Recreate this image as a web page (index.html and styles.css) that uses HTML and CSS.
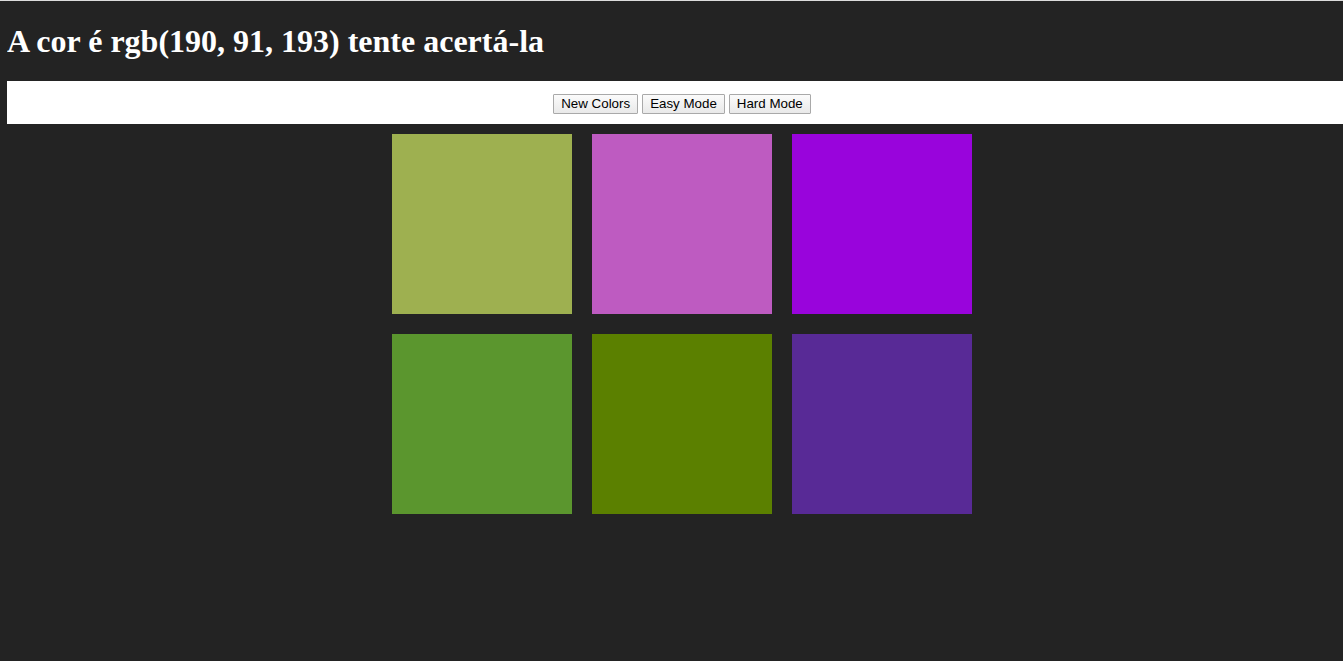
FILE: index.html
```html
<!DOCTYPE html>
<html lang="pt">
<head>
<meta charset="utf-8">
<title>Color Game</title>
<link rel="stylesheet" href="styles.css">
</head>
<body>
<h1 class="title">A cor é rgb(190, 91, 193) tente acertá-la</h1>
<div class="bar">
  <button class="btn">New Colors</button>
  <button class="btn">Easy Mode</button>
  <button class="btn">Hard Mode</button>
</div>
<div class="board">
  <div class="square sq1"></div>
  <div class="square sq2"></div>
  <div class="square sq3"></div>
  <div class="square sq4"></div>
  <div class="square sq5"></div>
  <div class="square sq6"></div>
</div>
</body>
</html>
```
FILE: styles.css
```css
html {
  background: #232323;
  border-top: 1px solid #dcdcdc;
  height: 100%;
  box-sizing: border-box;
  overflow: hidden;
}
body {
  margin: 0 0 0 7px;
  padding-top: 0.1px;
  font-family: "Liberation Serif", "Times New Roman", serif;
}
.title {
  color: #ffffff;
  font-size: 32px;
  font-weight: bold;
  margin: 22px 0 21px;
  line-height: 37px;
}
.bar {
  background: #ffffff;
  display: flex;
  justify-content: center;
  gap: 4px;
  padding: 13px 0 10px 14px;
  height: 43px;
  box-sizing: border-box;
}
.btn {
  font-family: "Liberation Sans", Arial, sans-serif;
  font-size: 13.33px;
  color: #000;
  height: 20px;
  box-sizing: border-box;
  padding: 0 7px;
  border: 1px solid #a9a9a9;
  border-radius: 1px;
  background: linear-gradient(#fbfbfb, #e9e9e9);
  line-height: 18px;
}
.board {
  margin-left: 375px;
  width: 600px;
  box-sizing: border-box;
  padding: 10px;
  display: grid;
  grid-template-columns: repeat(3, 180px);
  gap: 20px;
}
.square {
  width: 180px;
  height: 180px;
}
.sq1 { background: #9eb050; }
.sq2 { background: #be5bc1; }
.sq3 { background: #9904dc; }
.sq4 { background: #5b962e; }
.sq5 { background: #5b8000; }
.sq6 { background: #582a96; }
```
